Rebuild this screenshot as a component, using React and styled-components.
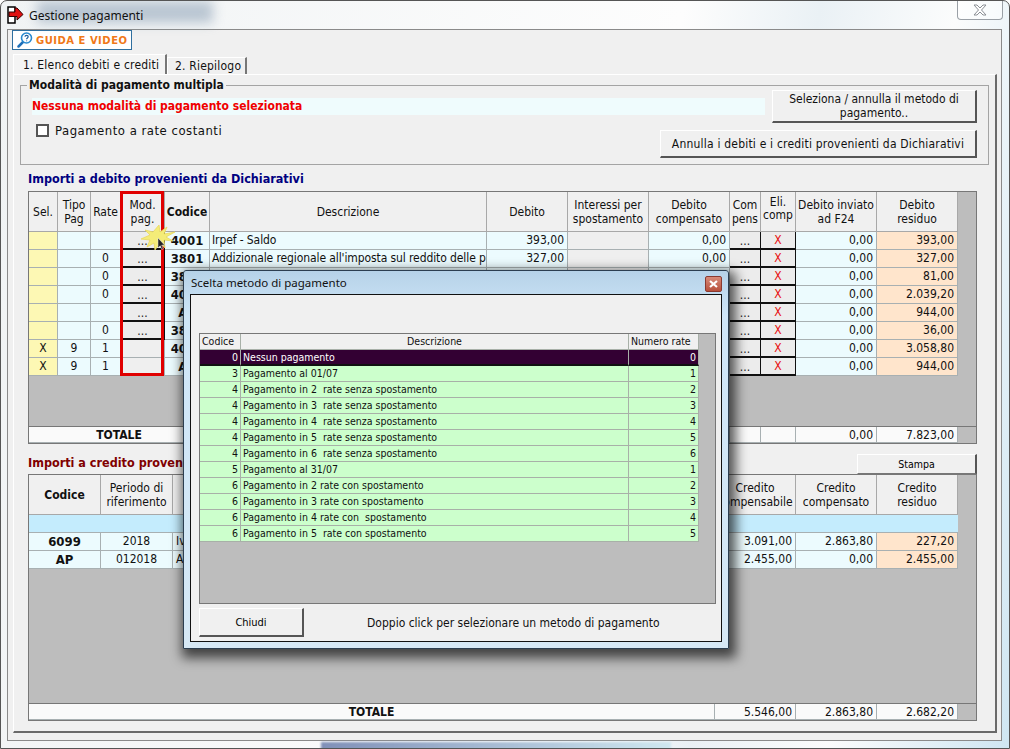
import styled, { createGlobalStyle } from "styled-components";

const GlobalStyle = createGlobalStyle`
    html, body {
        margin: 0;
        padding: 0;
        background: #fff;
    }
    * {
        box-sizing: border-box;
    }
`;

const uiFont = `"DejaVu Sans Condensed", "DejaVu Sans", sans-serif`;

const debitCols = "29px 33px 30px 44px 45px 277px 81px 81px 81px 31px 35px 81px 81px 1fr";
const debitTotalCols = "181px 277px 81px 81px 81px 31px 35px 81px 81px 1fr";
const creditCols = "72px 72px 542px 81px 81px 81px 1fr";
const creditTotalCols = "686px 81px 81px 81px 1fr";
const dialogCols = "41px 388px 70px 1fr";

const debitRows = [
    { cod: "4001", desc: "Irpef - Saldo", deb: "393,00" },
    { rate: "0", cod: "3801", desc: "Addizionale regionale all'imposta sul reddito delle persone fisiche", deb: "327,00" },
    { rate: "0", cod: "3843", desc: "Addizionale comunale", deb: "81,00" },
    { rate: "0", cod: "4033", desc: "Irpef - Acconto", deb: "2.039,20" },
    { cod: "AP", desc: "Imposta", deb: "944,00" },
    { rate: "0", cod: "3843", desc: "Addizionale comunale", deb: "36,00" },
    { sel: "X", tipo: "9", rate: "1", noMod: true, cod: "4034", desc: "Irpef - Acconto", deb: "3.058,80" },
    { sel: "X", tipo: "9", rate: "1", noMod: true, cod: "AP", desc: "Imposta", deb: "944,00" },
];

const metodi = [
    ["3", "Pagamento al 01/07", "1"],
    ["4", "Pagamento in 2  rate senza spostamento", "2"],
    ["4", "Pagamento in 3  rate senza spostamento", "3"],
    ["4", "Pagamento in 4  rate senza spostamento", "4"],
    ["4", "Pagamento in 5  rate senza spostamento", "5"],
    ["4", "Pagamento in 6  rate senza spostamento", "6"],
    ["5", "Pagamento al 31/07", "1"],
    ["6", "Pagamento in 2 rate con spostamento", "2"],
    ["6", "Pagamento in 3 rate con spostamento", "3"],
    ["6", "Pagamento in 4 rate con  spostamento", "4"],
    ["6", "Pagamento in 5  rate con spostamento", "5"],
];

const App = () => {
    return (
        <Win>
            <GlobalStyle />
            <GlassBlob />
            <BottomBlob />
            <TitleBar>
                <DoorIcon />
                <WinTitle>Gestione pagamenti</WinTitle>
                <CloseBtn aria-label="Chiudi">
                    <svg width="16" height="12" viewBox="0 0 16 12">
                        <path d="M2 1h3l3 3 3-3h3l-4.500 5 4.500 5h-3l-3-3-3 3h-3l4.500-5z" fill="#fff" stroke="#8a8f94" strokeWidth="1" />
                    </svg>
                </CloseBtn>
            </TitleBar>
            <Client>
                <GuideBtn>
                    <GuideIcon />
                    GUIDA E VIDEO
                </GuideBtn>
                <Tabs>
                    <Tab $active>1. Elenco debiti e crediti</Tab>
                    <Tab>2. Riepilogo</Tab>
                </Tabs>
                <TabPanel>
                    <Group>
                        <Legend>Modalità di pagamento multipla</Legend>
                        <GroupLeft>
                            <Strip>Nessuna modalità di pagamento selezionata</Strip>
                            <CheckRow>
                                <CheckBox />
                                Pagamento a rate costanti
                            </CheckRow>
                        </GroupLeft>
                        <GroupRight>
                            <WinBtn $w={205} $h={33}>Seleziona / annulla il metodo di pagamento..</WinBtn>
                            <WinBtn $w={317} $h={28} $spread>Annulla i debiti e i crediti provenienti da Dichiarativi</WinBtn>
                        </GroupRight>
                    </Group>

                    <SectionHead $top={3} $bottom={3}>
                        <Heading $color="#000080">Importi a debito provenienti da Dichiarativi</Heading>
                    </SectionHead>
                    <Sheet $h={253}>
                        <Row $cols={debitCols} $h={40}>
                            <Head>Sel.</Head>
                            <Head>Tipo<br />Pag</Head>
                            <Head>Rate</Head>
                            <Head>Mod.<br />pag.</Head>
                            <Head $bold>Codice</Head>
                            <Head>Descrizione</Head>
                            <Head>Debito</Head>
                            <Head>Interessi per<br />spostamento</Head>
                            <Head>Debito<br />compensato</Head>
                            <Head>Com<br />pens</Head>
                            <Head $tight>Eli.<br />comp</Head>
                            <Head>Debito inviato<br />ad F24</Head>
                            <Head>Debito<br />residuo</Head>
                        </Row>
                        {debitRows.map((r, i) => (
                            <Row key={i} $cols={debitCols} $h={18}>
                                <Cell $bg="#fdf8b4" $center>{r.sel}</Cell>
                                <Cell $center>{r.tipo}</Cell>
                                <Cell $center>{r.rate}</Cell>
                                {r.noMod ? <Cell $bg="#efefef" /> : <DotsBtn>...</DotsBtn>}
                                <Cell $center $bold>{r.cod}</Cell>
                                <DescCell>{r.desc}</DescCell>
                                <Cell $right>{r.deb}</Cell>
                                <Cell $bg="#efefef" />
                                <Cell $right>0,00</Cell>
                                <DotsBtn>...</DotsBtn>
                                <RemoveBtn>X</RemoveBtn>
                                <Cell $right>0,00</Cell>
                                <Cell $right $bg="#ffe5cc">{r.deb}</Cell>
                            </Row>
                        ))}
                        <SheetFill />
                        <Row $cols={debitTotalCols} $h={16} $last>
                            <TotalLabel>TOTALE</TotalLabel>
                            <Cell $bg="#fafafa" />
                            <Cell $bg="#fafafa" />
                            <Cell $bg="#fafafa" />
                            <Cell $bg="#fafafa" />
                            <Cell $bg="#fafafa" />
                            <Cell $bg="#fafafa" />
                            <Cell $right $bg="#fafafa">0,00</Cell>
                            <Cell $right $bg="#fafafa">7.823,00</Cell>
                        </Row>
                        <RedBox />
                    </Sheet>

                    <SectionHead $top={10} $between>
                        <Heading $color="#800000" $lift>Importi a credito provenienti da Dichiarativi</Heading>
                        <StampaBtn>Stampa</StampaBtn>
                    </SectionHead>
                    <Sheet $h={247}>
                        <Row $cols={creditCols} $h={40}>
                            <Head $bold>Codice</Head>
                            <Head>Periodo di<br />riferimento</Head>
                            <Head>Descrizione</Head>
                            <Head>Credito<br />compensabile</Head>
                            <Head>Credito<br />compensato</Head>
                            <Head>Credito<br />residuo</Head>
                        </Row>
                        <BlueRow />
                        <Row $cols={creditCols} $h={18}>
                            <Cell $center $bold>6099</Cell>
                            <Cell $center>2018</Cell>
                            <Cell>Iva</Cell>
                            <Cell $right>3.091,00</Cell>
                            <Cell $right>2.863,80</Cell>
                            <Cell $right $bg="#ffe5cc">227,20</Cell>
                        </Row>
                        <Row $cols={creditCols} $h={18}>
                            <Cell $center $bold>AP</Cell>
                            <Cell $center>012018</Cell>
                            <Cell>Acconto</Cell>
                            <Cell $right>2.455,00</Cell>
                            <Cell $right>0,00</Cell>
                            <Cell $right $bg="#ffe5cc">2.455,00</Cell>
                        </Row>
                        <SheetFill />
                        <Row $cols={creditTotalCols} $h={16} $last>
                            <TotalLabel>TOTALE</TotalLabel>
                            <Cell $right $bg="#fafafa">5.546,00</Cell>
                            <Cell $right $bg="#fafafa">2.863,80</Cell>
                            <Cell $right $bg="#fafafa">2.682,20</Cell>
                        </Row>
                    </Sheet>
                </TabPanel>
            </Client>

            <ClickSpark />

            <Dialog>
                <DialogBar>
                    <DialogTitle>Scelta metodo di pagamento</DialogTitle>
                    <DialogClose aria-label="Chiudi">
                        <svg width="9" height="8" viewBox="0 0 9 8">
                            <path d="M1 1l7 6M8 1L1 7" stroke="#fff" strokeWidth="2.200" />
                        </svg>
                    </DialogClose>
                </DialogBar>
                <DialogBody>
                    <MiniSheet>
                        <MiniRow $h={16} $head>
                            <MiniCell $head>Codice</MiniCell>
                            <MiniCell $head $center>Descrizione</MiniCell>
                            <MiniCell $head>Numero rate</MiniCell>
                        </MiniRow>
                        <MiniRow $h={16} $dark>
                            <MiniCell $right $dark>0</MiniCell>
                            <MiniCell $dark>Nessun pagamento</MiniCell>
                            <MiniCell $right $dark>0</MiniCell>
                        </MiniRow>
                        {metodi.map((m, i) => (
                            <MiniRow key={i} $h={16}>
                                <MiniCell $right>{m[0]}</MiniCell>
                                <MiniCell>{m[1]}</MiniCell>
                                <MiniCell $right>{m[2]}</MiniCell>
                            </MiniRow>
                        ))}
                    </MiniSheet>
                    <DialogFoot>
                        <ChiudiBtn>Chiudi</ChiudiBtn>
                        <FootNote>Doppio click per selezionare un metodo di pagamento</FootNote>
                    </DialogFoot>
                </DialogBody>
            </Dialog>
        </Win>
    );
};

export default App;

const DoorIcon = () => (
    <svg width="17" height="18" viewBox="0 0 17 18">
        <path d="M1 1h7v16H1z" fill="#fff" stroke="#000" strokeWidth="1.500" />
        <path d="M2 6h6V2h2l6 6.500L10 14v-3.500H2z" fill="#e01010" stroke="#300" strokeWidth="1" />
    </svg>
);

const GuideIcon = () => (
    <svg width="16" height="16" viewBox="0 0 16 16">
        <path d="M6 10L1.500 14.500" stroke="#1f6fb8" strokeWidth="2.500" strokeLinecap="round" />
        <circle cx="9.500" cy="6" r="5" fill="#fff" stroke="#2a8ad0" strokeWidth="1.600" />
        <path d="M8 4.800c0-2 3.200-2 3.200 0 0 1.200-1.600 1.300-1.600 2.500M9.600 8.400v.9" fill="none" stroke="#1f5f9f" strokeWidth="1.200" />
    </svg>
);

const ClickSpark = () => (
    <SparkWrap>
        <svg width="36" height="26" viewBox="0 0 36 26">
            <polygon
                points="19,0 20,7 27,2 24,9 35,7 26,12 33,16 24,15 25,23 20,18 15,25 14,18 7,22 10,15 1,14 10,10 5,5 13,7"
                fill="#f4ec78"
                stroke="#ead860"
                strokeWidth="0.800"
            />
            <path d="M18 13v10l2.200-2.200 1.600 3.700 1.500-.7-1.600-3.600h3z" fill="#222" stroke="#eee" strokeWidth="0.500" />
        </svg>
    </SparkWrap>
);

const Win = styled.div`
    position: relative;
    width: 1010px;
    height: 749px;
    overflow: hidden;
    padding: 0 7px 7px 6px;
    display: flex;
    flex-direction: column;
    font-family: ${uiFont};
    font-size: 12px;
    color: #111;
    background: linear-gradient(100deg, #f0f3f4 0%, #fdfdfd 60%, #eaf1f5 72%, #fbfcfc 84%, #cfe6f2 100%);
    border: 1px solid #555;
    border-radius: 7px 7px 0 0;
`;

const GlassBlob = styled.div`
    position: absolute;
    left: 36px;
    top: 0;
    width: 176px;
    height: 22px;
    background: #93a6ba;
    filter: blur(6px);
    opacity: 0.6;
`;

const BottomBlob = styled.div`
    position: absolute;
    left: 320px;
    bottom: -3px;
    width: 350px;
    height: 9px;
    background: linear-gradient(90deg, #8090b8, #cfe8f0);
    filter: blur(1px);
`;

const TitleBar = styled.div`
    position: relative;
    height: 28px;
    flex: none;
    display: flex;
    align-items: center;
    gap: 5px;
`;

const WinTitle = styled.div`
    font-family: "Noto Sans", sans-serif;
    font-size: 12px;
    color: #111;
`;

const CloseBtn = styled.button`
    position: absolute;
    right: -1px;
    top: -1px;
    width: 46px;
    height: 20px;
    padding: 0;
    display: flex;
    align-items: center;
    justify-content: center;
    background: rgba(255, 255, 255, 0.5);
    border: 1px solid #9aa0a6;
    border-top: none;
    border-radius: 0 0 4px 4px;
`;

const Client = styled.div`
    flex: 1;
    min-height: 0;
    display: flex;
    flex-direction: column;
    background: #f0f0f0;
    border: 1px solid #8a8a8a;
    padding: 0 4px 7px 5px;
`;

const GuideBtn = styled.button`
    align-self: flex-start;
    width: 120px;
    height: 20px;
    margin-left: -1px;
    padding: 0 0 0 4px;
    display: flex;
    align-items: center;
    gap: 3px;
    background: #fff;
    border: 1px solid #2f6f9f;
    color: #f07818;
    font-family: "DejaVu Sans", sans-serif;
    font-size: 10px;
    font-weight: bold;
    letter-spacing: 0.500px;
    white-space: nowrap;
`;

const Tabs = styled.div`
    height: 20px;
    margin-top: 4px;
    display: flex;
    align-items: flex-end;
    flex: none;
`;

const Tab = styled.div`
    height: ${(p) => (p.$active ? "20px" : "17px")};
    width: ${(p) => (p.$active ? "154px" : "80px")};
    padding-left: ${(p) => (p.$active ? "9px" : "7px")};
    display: flex;
    align-items: center;
    font-size: 12px;
    letter-spacing: 0.200px;
    background: ${(p) => (p.$active ? "#f4f4f4" : "#f0f0f0")};
    border-left: 1px solid #fff;
    border-top: 1px solid #fff;
    border-right: 2px solid #777;
`;

const TabPanel = styled.div`
    flex: 1;
    min-height: 0;
    padding: 10px 6px 0 6px;
    border-top: 1px solid #fff;
    border-left: 1px solid #fff;
    border-right: 2px solid #6a6a6a;
    border-bottom: 2px solid #6a6a6a;
`;

const Group = styled.div`
    position: relative;
    height: 80px;
    width: 969px;
    display: flex;
    justify-content: space-between;
    padding: 5px 11px 6px 11px;
    border: 1px solid #a4a4a4;
`;

const Legend = styled.div`
    position: absolute;
    left: 6px;
    top: -8px;
    padding: 0 2px;
    background: #f0f0f0;
    font-weight: bold;
    font-size: 12px;
    line-height: 14px;
`;

const GroupLeft = styled.div`
    display: flex;
    flex-direction: column;
`;

const Strip = styled.div`
    width: 733px;
    height: 17px;
    margin-top: 7px;
    line-height: 17px;
    background: #effcfd;
    color: #f00000;
    font-weight: bold;
    font-size: 12px;
`;

const CheckRow = styled.div`
    display: flex;
    align-items: center;
    gap: 6px;
    margin: 8px 0 0 4px;
    font-size: 13px;
    letter-spacing: 0.500px;
`;

const CheckBox = styled.div`
    width: 13px;
    height: 13px;
    background: #fff;
    border: 2px solid #555;
`;

const GroupRight = styled.div`
    display: flex;
    flex-direction: column;
    align-items: flex-end;
    gap: 7px;
    position: absolute;
    right: 11px;
    top: 4px;
`;

const WinBtn = styled.button`
    width: ${(p) => p.$w}px;
    height: ${(p) => p.$h}px;
    padding: 0 10px;
    font-family: ${uiFont};
    font-size: 12px;
    line-height: 14px;
    letter-spacing: ${(p) => (p.$spread ? "0.200px" : "0")};
    color: #111;
    background: #f0f0f0;
    border: 1px solid;
    border-color: #fff #555 #555 #fff;
    border-width: 1px 2px 2px 1px;
`;

const SectionHead = styled.div`
    width: 949px;
    height: 20px;
    margin: ${(p) => p.$top}px 0 ${(p) => p.$bottom || 0}px 8px;
    display: flex;
    align-items: center;
    justify-content: ${(p) => (p.$between ? "space-between" : "flex-start")};
`;

const Heading = styled.div`
    padding-bottom: ${(p) => (p.$lift ? "4px" : "0")};
    font-weight: bold;
    font-size: 12.500px;
    color: ${(p) => p.$color};
`;

const StampaBtn = styled.button`
    width: 120px;
    height: 20px;
    padding: 0;
    font-family: ${uiFont};
    font-size: 10.500px;
    background: #f0f0f0;
    border: 1px solid;
    border-color: #fff #555 #777 #fff;
    border-width: 1px 2px 1px 1px;
`;

const Sheet = styled.div`
    position: relative;
    width: 949px;
    height: ${(p) => p.$h}px;
    margin-left: 8px;
    display: flex;
    flex-direction: column;
    background: #bdbdbd;
    border: 1px solid #777;
`;

const SheetFill = styled.div`
    flex: 1;
    border-bottom: 1px solid #777;
`;

const Row = styled.div`
    display: grid;
    flex: none;
    grid-template-columns: ${(p) => p.$cols};
    height: ${(p) => p.$h}px;
`;

const Head = styled.div`
    display: flex;
    align-items: center;
    justify-content: center;
    text-align: center;
    padding-bottom: ${(p) => (p.$tight ? "5px" : "0")};
    background: #f0f0f0;
    border-right: 1px solid #a8a8a8;
    border-bottom: 1px solid #a8a8a8;
    font-size: 12px;
    font-weight: ${(p) => (p.$bold ? "bold" : "normal")};
    line-height: ${(p) => (p.$tight ? "13px" : "14px")};
`;

const Cell = styled.div`
    overflow: hidden;
    white-space: nowrap;
    padding: 0 3px;
    background: ${(p) => p.$bg || "#ecfbfe"};
    border-right: 1px solid #a8b0b2;
    border-bottom: 1px solid #a8b0b2;
    text-align: ${(p) => (p.$center ? "center" : p.$right ? "right" : "left")};
    font-size: ${(p) => (p.$bold ? "13px" : "12px")};
    font-weight: ${(p) => (p.$bold ? "bold" : "normal")};
    line-height: 17px;
`;

const DescCell = styled(Cell)`
    padding: 0 2px;
    letter-spacing: -0.100px;
`;

const TotalLabel = styled(Cell)`
    text-align: center;
    font-weight: bold;
    font-size: 12px;
    background: #fafafa;
`;

const DotsBtn = styled.button`
    padding: 2px 0 0;
    font-family: ${uiFont};
    font-size: 12px;
    line-height: 12px;
    color: #222;
    background: #ececec;
    border: none;
    border-right: 1px solid #111;
    border-bottom: 2px solid #111;
`;

const RemoveBtn = styled(DotsBtn)`
    padding-top: 0;
    color: #e81010;
`;

const BlueRow = styled.div`
    height: 18px;
    flex: none;
    width: 929px;
    background: #c4ecfd;
    border-bottom: 1px solid #a8b0b2;
`;

const RedBox = styled.div`
    position: absolute;
    left: 91px;
    top: -1px;
    width: 44px;
    height: 185px;
    border: 3px solid #e00000;
`;

const SparkWrap = styled.div`
    position: absolute;
    left: 139px;
    top: 224px;
    width: 36px;
    height: 26px;
`;

const Dialog = styled.div`
    position: absolute;
    left: 182px;
    top: 269px;
    width: 546px;
    height: 379px;
    padding: 0 6px 6px 6px;
    display: flex;
    flex-direction: column;
    background: linear-gradient(180deg, #b6d2e8 0%, #cfe6f8 12%, #d6e8f5 100%);
    border: 1px solid #2c3e50;
    border-radius: 3px 3px 0 0;
    box-shadow: 3px 5px 12px 4px rgba(0, 0, 0, 0.65);
`;

const DialogBar = styled.div`
    position: relative;
    height: 23px;
    flex: none;
    display: flex;
    align-items: center;
    padding-left: 1px;
`;

const DialogTitle = styled.div`
    font-family: "Noto Sans", sans-serif;
    font-size: 11.500px;
`;

const DialogClose = styled.button`
    position: absolute;
    right: 0;
    top: 5px;
    width: 17px;
    height: 16px;
    padding: 0;
    display: flex;
    align-items: center;
    justify-content: center;
    background: linear-gradient(180deg, #d88a78, #b8503c);
    border: 1px solid #8a3a30;
    border-radius: 2px;
`;

const DialogBody = styled.div`
    flex: 1;
    min-height: 0;
    display: flex;
    flex-direction: column;
    padding: 38px 6px 0 8px;
    background: #f0f0f0;
    border: 1px solid #111;
`;

const MiniSheet = styled.div`
    height: 271px;
    width: 517px;
    flex: none;
    background: #bdbdbd;
    border: 1px solid #777;
`;

const MiniRow = styled.div`
    display: grid;
    grid-template-columns: ${dialogCols};
    height: ${(p) => p.$h}px;
`;

const MiniCell = styled.div`
    overflow: hidden;
    white-space: pre;
    padding: 0 2px;
    font-size: 10.500px;
    line-height: 15px;
    text-align: ${(p) => (p.$center ? "center" : p.$right ? "right" : "left")};
    color: ${(p) => (p.$dark ? "#fff" : "#111")};
    background: ${(p) => (p.$dark ? "#330033" : p.$head ? "#f0f0f0" : "#ccffcc")};
    border-right: 1px solid #a8b0a8;
    border-bottom: ${(p) => (p.$dark ? "2px solid #111" : "1px solid #a8b0a8")};
`;

const DialogFoot = styled.div`
    display: flex;
    align-items: center;
    margin-top: 4px;
`;

const ChiudiBtn = styled.button`
    width: 105px;
    height: 29px;
    padding: 0;
    font-family: ${uiFont};
    font-size: 11px;
    background: #f0f0f0;
    border: 1px solid;
    border-color: #fff #555 #555 #fff;
    border-width: 1px 2px 2px 1px;
`;

const FootNote = styled.div`
    margin-left: 63px;
    font-size: 12px;
`;
